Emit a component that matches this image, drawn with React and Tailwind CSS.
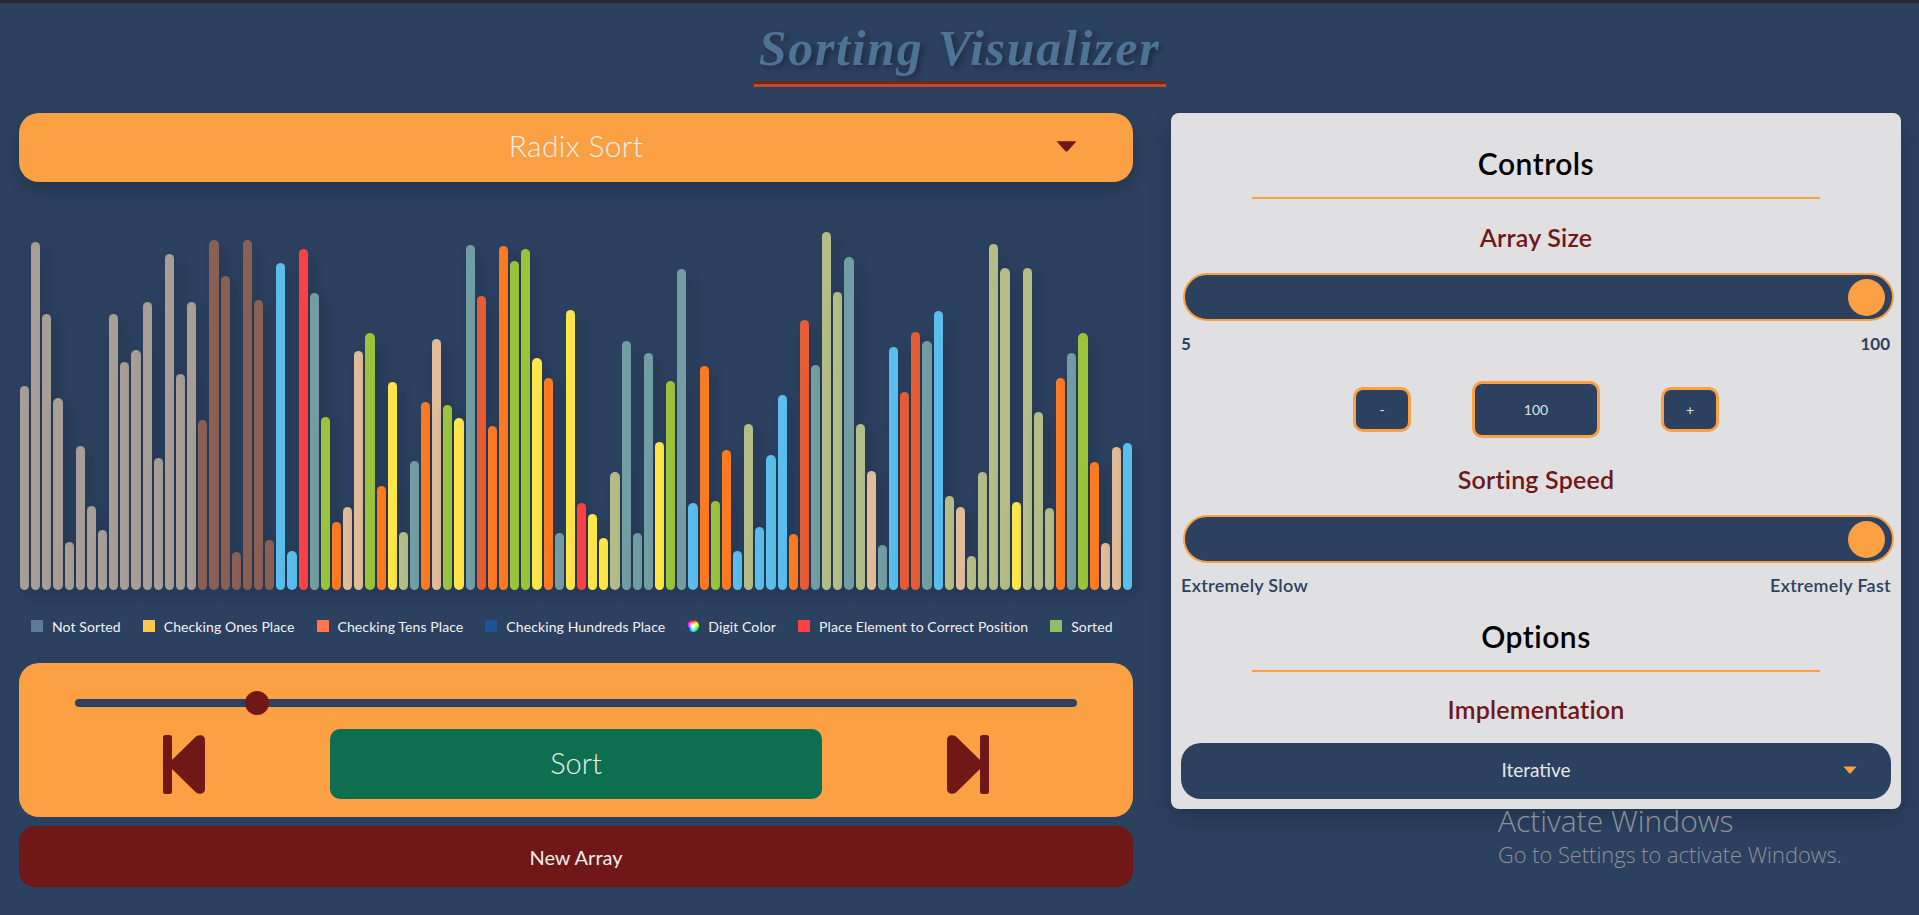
import React from 'react';

const colors = {
  g: 'bg-[#a69e97]',
  b: 'bg-[#8a6055]',
  s: 'bg-[#5bbdec]',
  r: 'bg-[#fc4146]',
  t: 'bg-[#729da2]',
  l: 'bg-[#9bc43c]',
  o: 'bg-[#fd7a20]',
  n: 'bg-[#e0bc98]',
  y: 'bg-[#fee648]',
  k: 'bg-[#b4bc88]',
  e: 'bg-[#e65c35]',
};

// [top offset measured in the reference, colour key]
const bars = [
  [498, 'g'], [66, 'g'], [282, 'g'], [534, 'g'], [966, 'g'], [678, 'g'], [858, 'g'], [930, 'g'], [282, 'g'], [426, 'g'],
  [390, 'g'], [246, 'g'], [714, 'g'], [102, 'g'], [462, 'g'], [246, 'g'], [600, 'b'], [60, 'b'], [168, 'b'], [996, 'b'],
  [60, 'b'], [240, 'b'], [960, 'b'], [129, 's'], [993, 's'], [87, 'r'], [219, 't'], [591, 'l'], [906, 'o'], [861, 'n'],
  [393, 'n'], [339, 'l'], [798, 'o'], [486, 'y'], [937, 'k'], [723, 't'], [546, 'o'], [357, 'n'], [555, 'l'], [594, 'y'],
  [75, 't'], [228, 'e'], [618, 'o'], [78, 'o'], [123, 'l'], [87, 'l'], [414, 'y'], [474, 'o'], [939, 't'], [270, 'y'],
  [849, 'r'], [882, 'y'], [954, 'y'], [756, 'k'], [363, 't'], [939, 't'], [399, 't'], [666, 'y'], [483, 'l'], [147, 't'],
  [849, 's'], [438, 'o'], [843, 'l'], [690, 'o'], [993, 's'], [612, 'k'], [921, 's'], [705, 's'], [525, 's'], [942, 'o'],
  [300, 'e'], [435, 't'], [36, 'k'], [216, 'k'], [111, 't'], [612, 'k'], [753, 'n'], [975, 't'], [381, 's'], [516, 'e'],
  [336, 'e'], [363, 't'], [273, 's'], [828, 'k'], [861, 'n'], [1008, 'k'], [756, 'k'], [72, 'k'], [144, 'k'], [846, 'y'],
  [144, 'k'], [576, 'k'], [864, 'k'], [474, 'o'], [399, 't'], [339, 'l'], [726, 'o'], [969, 'n'], [681, 'n'], [669, 's'],
];

const legend = [
  { label: 'Not Sorted', swatch: 'bg-[#5d7a99]' },
  { label: 'Checking Ones Place', swatch: 'bg-[#fdc64f]' },
  { label: 'Checking Tens Place', swatch: 'bg-[#fd7650]' },
  { label: 'Checking Hundreds Place', swatch: 'bg-[#1c5499]' },
  { label: 'Digit Color', swatch: 'rounded-full bg-[radial-gradient(circle,#fff_15%,transparent_65%),conic-gradient(#f00,#ff0,#0f0,#0ff,#00f,#f0f,#f00)]' },
  { label: 'Place Element to Correct Position', swatch: 'bg-[#fc4146]' },
  { label: 'Sorted', swatch: 'bg-[#8fbe6b]' },
];

function StepIcon({ flip }) {
  return (
    <svg width="42" height="59" viewBox="0 0 42 59" className={flip ? '-scale-x-100' : ''} fill="#701717">
      <rect x="0" y="0" width="9" height="59" rx="2.5" />
      <path d="M9 25 L33 1.5 C37 -1 42 0.5 42 5 V54 C42 58.5 37 60 33 57.5 L9 34 Z" />
    </svg>
  );
}

function Caret({ className }) {
  return (
    <svg viewBox="0 0 20 10" className={className} fill="currentColor">
      <path d="M0.5 0 H19.5 L11 9.5 Q10 10.2 9 9.5 Z" />
    </svg>
  );
}

function SectionTitle({ children, rule }) {
  return (
    <>
      <h2 className="text-center text-[30px] leading-[34px] font-semibold tracking-[0.5px] text-black">{children}</h2>
      <div className={`mx-auto h-[2px] w-[568px] bg-[#fba043] ${rule}`} />
    </>
  );
}

function Label({ children }) {
  return <h3 className="pb-[2px] text-center text-[25px] leading-[24px] font-semibold tracking-[0.2px] text-[#701717]">{children}</h3>;
}

function Slider() {
  return (
    <div className="ml-[2px] mr-[-3px] flex h-[48px] items-center justify-end rounded-full border-2 border-[#fba043] bg-[#2c4160] pr-[7px]">
      <div className="h-[37px] w-[37px] rounded-full bg-[#fba043]" />
    </div>
  );
}

export default function App() {
  return (
    <div className="relative h-[915px] w-full overflow-hidden bg-[#2c4160] font-['Lato',sans-serif]">
      <div className="h-[3px] bg-[#2b2b2f]" />

      <header className="flex flex-col items-center">
        <h1 className="mt-[13px] h-[65px] text-[50px] leading-[65px] font-bold tracking-[1.7px] text-[#4f7395] italic [font-family:'Liberation_Serif',serif] [text-shadow:3px_3px_6px_rgba(0,0,0,0.35)]">
          Sorting Visualizer
        </h1>
        <div className="h-[6px] w-[412px] bg-[linear-gradient(#6b2a1c_50%,#c04a2c_50%)]" />
      </header>

      <main className="mt-[26px] flex gap-[38px] pl-[19px]">
        <section className="w-[1114px]">
          <div className="relative flex h-[69px] items-center justify-center rounded-[20px] bg-[#fba043] pb-[5px] text-[30px] font-light tracking-[0.3px] text-[#eeeeee] shadow-[0_8px_16px_rgba(0,0,0,0.2)]">
            Radix Sort
            <Caret className="absolute right-[56px] top-[28px] h-[11px] w-[21px] text-[#701717]" />
          </div>

          <div className="mt-[50px] flex h-[358px] items-end gap-[2px] px-px">
            {bars.map(([top, c], i) => (
              <div
                key={i}
                className={`flex-1 rounded-[5px] shadow-[5px_5px_14px_rgba(0,0,0,0.18)] ${colors[c]}`}
                style={{ height: (1110 - top) / 3 }}
              />
            ))}
          </div>

          <div className="mt-[30px] flex h-[12px] items-center gap-[22px] pl-[12px] text-[14px] tracking-[0.1px] text-[#f2f2f2]">
            {legend.map((item) => (
              <div key={item.label} className="flex items-center gap-[9px]">
                <span className={`h-[12px] w-[12px] ${item.swatch}`} />
                <span>{item.label}</span>
              </div>
            ))}
          </div>

          <div className="mt-[31px] h-[154px] rounded-[20px] bg-[#fba043] px-[56px] pt-[36px]">
            <div className="relative h-[8px] rounded-full bg-[#2c4160]">
              <div className="absolute left-[170px] top-[-8px] h-[24px] w-[24px] rounded-full bg-[#701717]" />
            </div>
            <div className="mt-[22px] flex items-center justify-between pl-[88px] pr-[88px]">
              <StepIcon />
              <button className="h-[70px] w-[492px] rounded-[10px] bg-[#0d6f4f] pb-[2px] text-[29px] font-light text-[#eeeeee]">Sort</button>
              <StepIcon flip />
            </div>
          </div>

          <button className="mt-[9px] h-[61px] w-full rounded-[16px] bg-[#701717] text-[20px] text-[#eeeeee]">New Array</button>
        </section>

        <aside className="h-[696px] w-[730px] rounded-[8px] bg-[#e0e0e2] px-[10px] pt-[33px] shadow-[0_10px_24px_rgba(0,0,0,0.2)]">
          <SectionTitle rule="mt-[17px]">Controls</SectionTitle>
          <div className="mt-[26px]"><Label>Array Size</Label></div>
          <div className="mt-[22px]"><Slider /></div>
          <div className="mt-[13px] flex justify-between pr-[1px] text-[17px] leading-[20px] font-bold text-[#2c4160]">
            <span>5</span>
            <span>100</span>
          </div>

          <div className="mt-[27px] flex items-center justify-center gap-[61px] text-[14px] text-[#e0e0e2]">
            <button className="h-[45px] w-[58px] rounded-[10px] border-[3px] border-[#fba043] bg-[#2c4160]">-</button>
            <div className="flex h-[57px] w-[128px] items-center justify-center rounded-[10px] border-[3px] border-[#fba043] bg-[#2c4160]">100</div>
            <button className="h-[45px] w-[58px] rounded-[10px] border-[3px] border-[#fba043] bg-[#2c4160]">+</button>
          </div>

          <div className="mt-[29px]"><Label>Sorting Speed</Label></div>
          <div className="mt-[22px]"><Slider /></div>
          <div className="mt-[12px] flex justify-between text-[18px] leading-[20px] font-semibold tracking-[0.3px] text-[#2c4160]">
            <span>Extremely Slow</span>
            <span>Extremely Fast</span>
          </div>

          <div className="mt-[24px]"><SectionTitle rule="mt-[17px]">Options</SectionTitle></div>
          <div className="mt-[25px]"><Label>Implementation</Label></div>
          <div className="relative mt-[20px] flex h-[56px] items-center justify-center rounded-[20px] bg-[#2c4160] pb-[2px] text-[19px] text-[#e6e6e6]">
            Iterative
            <Caret className="absolute right-[34px] top-[23px] h-[8px] w-[14px] text-[#fba043]" />
          </div>
        </aside>
      </main>

      <div className="absolute left-[1498px] top-[803px] font-light text-[#8c929b] [font-family:'Open_Sans',sans-serif]">
        <div className="text-[30px] leading-[36px]">Activate Windows</div>
        <div className="text-[21.8px] leading-[32px]">Go to Settings to activate Windows.</div>
      </div>
    </div>
  );
}
